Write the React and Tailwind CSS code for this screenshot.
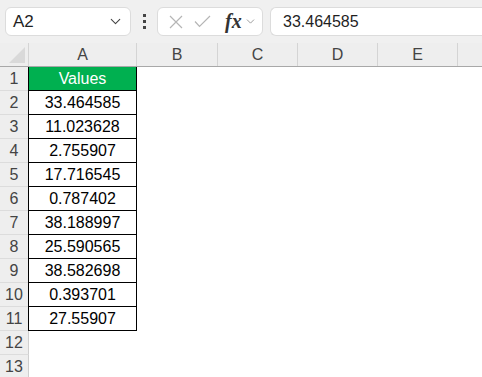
import { ChevronDown } from "lucide-react";

const values = [
  "33.464585",
  "11.023628",
  "2.755907",
  "17.716545",
  "0.787402",
  "38.188997",
  "25.590565",
  "38.582698",
  "0.393701",
  "27.55907",
];

const cols = ["A", "B", "C", "D", "E"];
const colWidths = ["w-[108px]", "w-[81px]", "w-[80px]", "w-[80px]", "w-[80px]"];

function FormulaBar() {
  return (
    <div className="h-[43px] bg-[#f0f0f0] flex items-center pl-[5px] gap-0">
      {/* name box */}
      <div className="w-[126px] h-[29px] bg-white border border-[#dcdcdc] rounded-[6px] flex items-center pl-[7px] pr-[6px]">
        <span className="text-[17px] text-[#1f1f1f] flex-1">A2</span>
        <ChevronDown size={17} strokeWidth={1.5} className="text-[#444]" />
      </div>
      {/* dots */}
      <div className="w-[26px] flex flex-col items-center gap-[3px]">
        <span className="w-[3px] h-[3px] bg-[#444]"></span>
        <span className="w-[3px] h-[3px] bg-[#444]"></span>
        <span className="w-[3px] h-[3px] bg-[#444]"></span>
      </div>
      {/* cancel / enter / fx */}
      <div className="w-[106px] h-[29px] bg-white border border-[#dcdcdc] rounded-[6px] flex items-center pl-[11px]">
        <svg width="14" height="14" viewBox="0 0 14 14" className="mr-[11px]">
          <path d="M1 1L13 13M13 1L1 13" stroke="#b5b5b5" strokeWidth="1.2" fill="none" />
        </svg>
        <svg width="17" height="13" viewBox="0 0 17 13" className="mr-[14px]">
          <path d="M1 6.5L5.5 11.5L16 1" stroke="#b5b5b5" strokeWidth="1.2" fill="none" />
        </svg>
        <span className="text-[20px] leading-none italic font-bold text-[#333] font-['Liberation_Serif',serif] mr-[2px] -mt-[2px]">fx</span>
        <ChevronDown size={13} strokeWidth={1.5} className="text-[#888]" />
      </div>
      {/* input */}
      <div className="ml-[7px] flex-1 h-[29px] bg-white border border-[#dcdcdc] border-r-0 rounded-l-[6px] flex items-center pl-[12px]">
        <span className="text-[16px] text-[#1f1f1f]">33.464585</span>
      </div>
    </div>
  );
}

function HeaderRow() {
  return (
    <div className="flex h-[24px] bg-[#eeeeee] border-b border-[#a8a8a8]">
      <div className="w-[29px] border-r border-[#d4d4d4] relative">
        <svg width="16" height="16" viewBox="0 0 16 16" className="absolute right-[3px] bottom-[3px]">
          <path d="M16 0L16 16L0 16Z" fill="#d9d9d9" />
        </svg>
      </div>
      {cols.map((c, i) => (
        <div
          key={c}
          className={`${colWidths[i]} border-r border-[#d4d4d4] flex items-center justify-center text-[16px] text-[#444]`}
        >
          {c}
        </div>
      ))}
      <div className="flex-1"></div>
    </div>
  );
}

function RowNum({ n }) {
  return (
    <div className="w-[29px] shrink-0 bg-[#eeeeee] border-r border-[#cfcfcf] border-b border-b-[#dcdcdc] flex items-center justify-center text-[16px] text-[#444]">
      {n}
    </div>
  );
}

export default function App() {
  return (
    <div className="w-[482px] h-[377px] overflow-hidden bg-white font-['Liberation_Sans',Arial,sans-serif]">
      <FormulaBar />
      <HeaderRow />
      <div className="flex flex-col">
        <div className="flex h-[24px]">
          <RowNum n={1} />
          <div className="w-[109px] -ml-px bg-[#00b050] border border-black border-t-0 flex items-center justify-center text-[16px] text-white">
            Values
          </div>
        </div>
        {values.map((v, i) => (
          <div key={i} className="flex h-[24px]">
            <RowNum n={i + 2} />
            <div className="w-[109px] -ml-px border border-black border-t-0 flex items-center justify-center text-[16px] text-black">
              {v}
            </div>
          </div>
        ))}
        <div className="flex h-[24px]">
          <RowNum n={12} />
        </div>
        <div className="flex h-[24px]">
          <RowNum n={13} />
        </div>
      </div>
    </div>
  );
}
